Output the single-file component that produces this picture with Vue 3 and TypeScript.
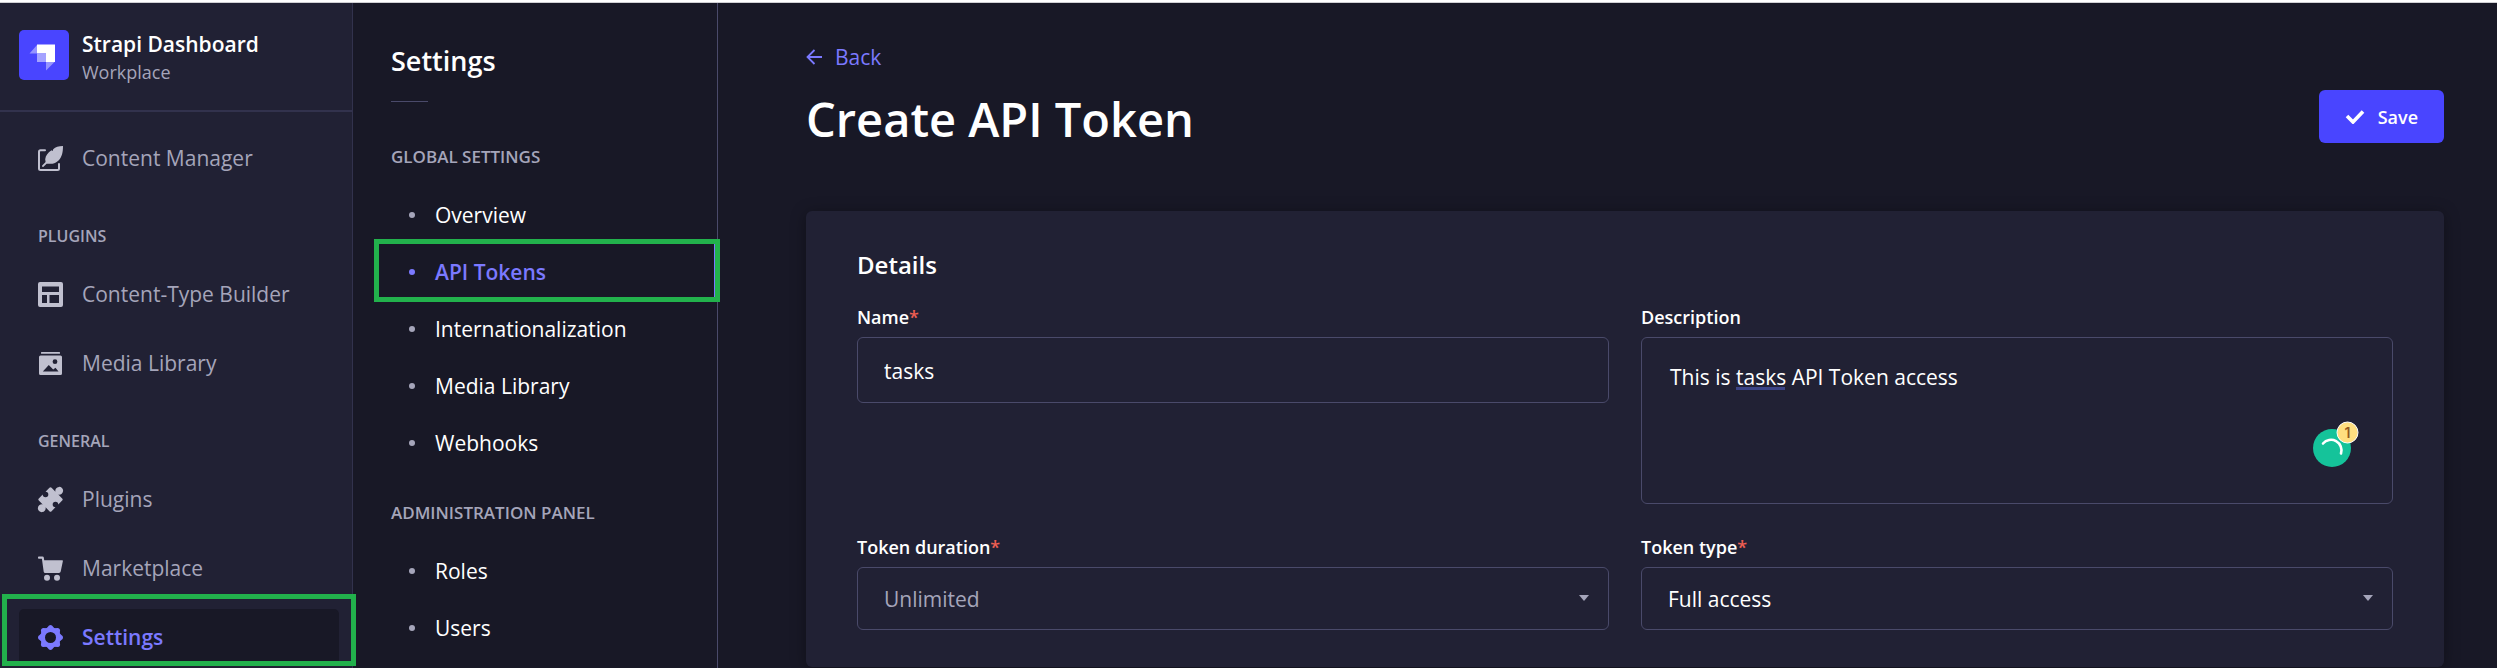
<script setup lang="ts">
import { ref } from 'vue'

type IconName = 'feather' | 'layout' | 'media' | 'puzzle' | 'cart' | 'gear'

interface NavItem {
  label: string
  icon: IconName
  active?: boolean
}

interface NavGroup {
  title?: string
  items: NavItem[]
}

interface SubGroup {
  title: string
  items: { label: string; active?: boolean }[]
}

const navGroups: NavGroup[] = [
  { items: [{ label: 'Content Manager', icon: 'feather' }] },
  {
    title: 'Plugins',
    items: [
      { label: 'Content-Type Builder', icon: 'layout' },
      { label: 'Media Library', icon: 'media' },
    ],
  },
  {
    title: 'General',
    items: [
      { label: 'Plugins', icon: 'puzzle' },
      { label: 'Marketplace', icon: 'cart' },
      { label: 'Settings', icon: 'gear', active: true },
    ],
  },
]

const subGroups: SubGroup[] = [
  {
    title: 'Global settings',
    items: [
      { label: 'Overview' },
      { label: 'API Tokens', active: true },
      { label: 'Internationalization' },
      { label: 'Media Library' },
      { label: 'Webhooks' },
    ],
  },
  {
    title: 'Administration panel',
    items: [{ label: 'Roles' }, { label: 'Users' }],
  },
]

const teeth = [0, 45, 90, 135, 180, 225, 270, 315]

const name = ref('tasks')
const description = ref('This is tasks API Token access')
const duration = ref('Unlimited')
const tokenType = ref('Full access')
</script>

<template>
  <div class="page">
    <div class="strip"></div>
    <div class="shell">
      <nav class="sidebar" aria-label="Main">
        <div class="brand">
          <svg class="logo" viewBox="0 0 50 50" aria-hidden="true">
            <rect width="50" height="50" rx="5" fill="#4945ff" />
            <path d="M18 14.5H36V32H27V23.5H18Z" fill="#fff" />
            <path d="M18 23.5H27V32H18Z" fill="#a4a2ff" />
            <path d="M18 15V23.5H10.500Z M27 32H35.500L27 40.500Z" fill="#9593ff" />
          </svg>
          <div>
            <div class="brand-name">Strapi Dashboard</div>
            <div class="brand-sub">Workplace</div>
          </div>
        </div>

        <div v-for="(group, g) in navGroups" :key="g" class="nav-group">
          <h2 v-if="group.title" class="group-title">{{ group.title }}</h2>
          <ul class="nav-list">
            <li v-for="item in group.items" :key="item.label">
              <a href="#" class="nav-link" :class="{ active: item.active }">
                <svg class="nav-icon" viewBox="0 0 25 25" aria-hidden="true">
                  <g v-if="item.icon === 'feather'">
                    <path d="M7 4.200H2.500Q1 4.200 1 5.700V22.500Q1 24 2.500 24H19.500Q21 24 21 22.500V18" fill="none" stroke="currentColor" stroke-width="2" stroke-linecap="round" />
                    <path d="M25 0C20.500 0 17.500 1 15.200 3.200L14.700 4.900L13.600 4.300C10 6.500 7.600 9.500 7.200 13.200L7.600 16L4.200 19.500C3.500 20.300 4.700 21.500 5.500 20.800L8.600 17.700H14.500C17 17.200 19 16.200 20.500 14.600C23.900 11 25 6.500 25 0Z" fill="currentColor" />
                  </g>
                  <path v-else-if="item.icon === 'layout'" fill="currentColor" fill-rule="evenodd" d="M2 0H23Q25 0 25 2V23Q25 25 23 25H2Q0 25 0 23V2Q0 0 2 0ZM4 4.500V10H21V4.500ZM4 13V21H9V13ZM11.500 13V21H21V13Z" />
                  <g v-else-if="item.icon === 'media'" fill="currentColor">
                    <rect x="3" y="1" width="19" height="1.800" rx=".6" />
                    <path fill-rule="evenodd" d="M2.500 4.500H22.500Q24 4.500 24 6V22.500Q24 24 22.500 24H2.500Q1 24 1 22.500V6Q1 4.500 2.500 4.500ZM17 8.300A2.400 2.400 0 1 0 17 13.100A2.400 2.400 0 1 0 17 8.300ZM4.800 20.500H20.500L17.500 16.800L15.200 18.500L10.800 14Z" />
                  </g>
                  <path v-else-if="item.icon === 'puzzle'" fill="currentColor" transform="translate(12.5 12.500) rotate(45)" d="M-7.500 -9H-2A3.900 3.900 0 1 1 2 -9H7.500A1.500 1.500 0 0 1 9 -7.500V-2A2.800 2.800 0 1 0 9 2V7.500A1.500 1.500 0 0 1 7.500 9H2A3.900 3.900 0 1 1 -2 9H-7.500A1.500 1.500 0 0 1 -9 7.500V2A2.800 2.800 0 1 0 -9 -2V-7.500A1.500 1.500 0 0 1 -7.500 -9Z" />
                  <g v-else-if="item.icon === 'cart'" fill="currentColor">
                    <path d="M.8 .5H4.500Q5.600 .5 5.800 1.600L6.200 4.200H24.200Q25.100 4.200 24.900 5.100L22.700 15.600Q22.400 17 21 17H7.200Q5.900 17 5.700 15.700L3.900 2.700H.8Q0 2.700 0 1.900V1.300Q0 .5 .8 .5Z" />
                    <circle cx="9" cy="21.800" r="3" />
                    <circle cx="19" cy="21.800" r="3" />
                  </g>
                  <g v-else transform="translate(12.5 12.500)">
                    <circle r="7.900" fill="none" stroke="currentColor" stroke-width="4.800" />
                    <path v-for="deg in teeth" :key="deg" :transform="`rotate(${deg})`" d="M-4 -9L-1.500 -12.100Q0 -13 1.500 -12.100L4 -9Z" fill="currentColor" />
                  </g>
                </svg>
                <span>{{ item.label }}</span>
              </a>
            </li>
          </ul>
        </div>
      </nav>

      <aside class="subnav">
        <h2 class="subnav-title">Settings</h2>
        <div class="subnav-rule"></div>
        <section v-for="group in subGroups" :key="group.title" class="sub-group">
          <h3 class="sub-title">{{ group.title }}</h3>
          <ul class="nav-list">
            <li v-for="item in group.items" :key="item.label">
              <a href="#" class="sub-link" :class="{ active: item.active }">
                <span class="bullet"></span>
                <span>{{ item.label }}</span>
              </a>
            </li>
          </ul>
        </section>
      </aside>

      <main class="main">
        <a href="#" class="back">
          <svg viewBox="0 0 16 16" class="back-icon" aria-hidden="true">
            <path d="M16 8H1.500M8.500 1L1.500 8L8.500 15" fill="none" stroke="currentColor" stroke-width="1.800" />
          </svg>
          <span>Back</span>
        </a>
        <div class="heading">
          <h1>Create API Token</h1>
          <button type="submit" form="token-form" class="save">
            <svg viewBox="0 0 19 14" class="save-icon" aria-hidden="true">
              <path d="M1.500 6L7.500 12L17.500 1.500" fill="none" stroke="currentColor" stroke-width="3.600" />
            </svg>
            <span>Save</span>
          </button>
        </div>

        <form id="token-form" class="card" @submit.prevent>
          <h2 class="card-title">Details</h2>
          <div class="grid">
            <div class="field">
              <label for="name">Name<span class="req">*</span></label>
              <input id="name" v-model="name" type="text" class="control input" />
            </div>
            <div class="field">
              <label for="description">Description</label>
              <div class="wrap">
                <textarea id="description" v-model="description" class="control textarea" spellcheck="false"></textarea>
                <span class="hint-line"></span>
                <svg class="checker" viewBox="0 0 46 46" aria-hidden="true">
                  <circle cx="19" cy="27" r="19" fill="#15c39a" />
                  <path d="M10 22.500A10.500 10.500 0 0 1 28 32.500" fill="none" stroke="#fff" stroke-width="2.600" stroke-linecap="round" />
                  <circle cx="34.500" cy="11.500" r="10.500" fill="#ffdf80" stroke="#fff" stroke-width="1" />
                  <text x="34.500" y="16.500" text-anchor="middle" class="count">1</text>
                </svg>
              </div>
            </div>
            <div class="field">
              <label for="duration">Token duration<span class="req">*</span></label>
              <div class="wrap">
                <select id="duration" v-model="duration" class="control select muted">
                  <option>Unlimited</option>
                </select>
                <svg class="caret" viewBox="0 0 10 6" aria-hidden="true"><path d="M0 0H10L5 6Z" fill="#a5a5ba" /></svg>
              </div>
            </div>
            <div class="field">
              <label for="type">Token type<span class="req">*</span></label>
              <div class="wrap">
                <select id="type" v-model="tokenType" class="control select">
                  <option>Full access</option>
                </select>
                <svg class="caret" viewBox="0 0 10 6" aria-hidden="true"><path d="M0 0H10L5 6Z" fill="#a5a5ba" /></svg>
              </div>
            </div>
          </div>
        </form>
      </main>
    </div>
  </div>
</template>

<style>
body {
  margin: 0;
  background: #181826;
}
</style>

<style scoped>
* {
  box-sizing: border-box;
}
.page {
  display: flex;
  flex-direction: column;
  min-height: 100vh;
  background: #181826;
  color: #fff;
  font-family: 'Open Sans', 'Noto Sans', sans-serif;
  font-size: 21px;
  line-height: 28px;
}
.strip {
  height: 3px;
  background: #fff;
  border-bottom: 1px solid #d0d0d4;
}
.shell {
  flex: 1;
  display: flex;
}
h1,
h2,
h3 {
  margin: 0;
  font-weight: 600;
}
a {
  color: inherit;
  text-decoration: none;
}
.nav-list {
  list-style: none;
  margin: 0;
  padding: 0;
}

.sidebar {
  position: relative;
  z-index: 1;
  flex: none;
  width: 353px;
  background: #212134;
  border-right: 1px solid #32324d;
}
.brand {
  display: flex;
  gap: 13px;
  height: 109px;
  padding: 27px 19px 0;
  border-bottom: 2px solid #32324d;
}
.logo {
  flex: none;
  width: 50px;
  height: 50px;
}
.brand-name {
  font-size: 21px;
  line-height: 28px;
  font-weight: 600;
}
.brand-sub {
  font-size: 18px;
  line-height: 28px;
  color: #a5a5ba;
}
.nav-group {
  padding: 18px 13px 0 19px;
}
.nav-group + .nav-group {
  padding-top: 38px;
}
.group-title,
.sub-title {
  font-size: 16px;
  line-height: 24px;
  color: #a5a5ba;
  text-transform: uppercase;
}
.group-title {
  padding-left: 19px;
  margin-bottom: 18px;
}
.nav-list li + li .nav-link {
  margin-top: 13px;
}
.nav-link {
  position: relative;
  display: flex;
  align-items: center;
  gap: 19px;
  height: 56px;
  padding-left: 19px;
  border-radius: 5px;
  color: #a5a5ba;
}
.nav-icon {
  width: 25px;
  height: 25px;
  color: #c0c0cf;
  overflow: visible;
}
.nav-link.active {
  background: #181826;
  color: #7b79ff;
  font-weight: 600;
}
.nav-link.active .nav-icon {
  color: #7b79ff;
}
.nav-link.active::after {
  content: '';
  position: absolute;
  inset: -15px -17px -1px;
  border: 5px solid #22b14c;
}

.subnav {
  flex: none;
  width: 365px;
  padding-top: 40px;
  border-right: 1px solid #4a4a6a;
}
.subnav-title {
  padding-left: 38px;
  font-size: 27px;
  line-height: 36px;
}
.subnav-rule {
  width: 37px;
  height: 1px;
  margin: 22px 0 0 38px;
  background: #4a4a6a;
}
.sub-title {
  padding-left: 38px;
  font-size: 17px;
}
.sub-group {
  padding-top: 43px;
}
.sub-group .nav-list {
  padding-top: 17px;
}
.sub-group + .sub-group {
  padding-top: 30px;
}
.sub-link {
  position: relative;
  display: flex;
  align-items: center;
  gap: 20px;
  height: 57px;
  padding-left: 56px;
}
.bullet {
  width: 6px;
  height: 6px;
  border-radius: 50%;
  background: #a5a5ba;
}
.sub-link.active {
  color: #7b79ff;
  border-right: 3px solid #7b79ff;
}
.sub-link.active > span {
  font-weight: 600;
}
.sub-link.active .bullet {
  background: #7b79ff;
}
.sub-link.active::after {
  content: '';
  position: absolute;
  inset: -4px -6px -2px 21px;
  border: 5px solid #22b14c;
}

.main {
  flex: 1;
  min-width: 0;
  padding: 40px 53px 0 88px;
}
.back {
  display: inline-flex;
  align-items: center;
  gap: 13px;
  color: #7b79ff;
}
.back-icon {
  width: 16px;
  height: 16px;
}
.heading {
  display: flex;
  align-items: flex-start;
  justify-content: space-between;
  margin-top: 16px;
}
h1 {
  font-size: 47px;
  line-height: 64px;
}
.save {
  display: flex;
  align-items: center;
  gap: 13px;
  height: 53px;
  margin-top: 3px;
  padding: 0 26px;
  border: 0;
  border-radius: 6px;
  background: #4945ff;
  color: #fff;
  font: 600 18px/24px 'Open Sans', 'Noto Sans', sans-serif;
}
.save-icon {
  width: 20px;
  height: 14px;
}
.card {
  margin-top: 60px;
  padding: 38px 51px 37px;
  border-radius: 6px;
  background: #212134;
  box-shadow: 0 2px 15px rgba(3, 3, 5, 0.35);
}
.card-title {
  font-size: 24px;
  line-height: 32px;
}
.grid {
  display: grid;
  grid-template-columns: 1fr 1fr;
  gap: 31px 32px;
  margin-top: 24px;
}
.field label {
  display: block;
  margin-bottom: 8px;
  font-size: 18px;
  line-height: 24px;
  font-weight: 600;
}
.req {
  color: #ee5e52;
}
.wrap {
  position: relative;
}
.control {
  display: block;
  width: 100%;
  margin: 0;
  padding: 0 26px;
  border: 1px solid #4a4a6a;
  border-radius: 6px;
  outline: 0;
  background: #212134;
  color: #fff;
  font: 400 21px/28px 'Open Sans', 'Noto Sans', sans-serif;
}
.input {
  height: 66px;
  padding-top: 2px;
}
.textarea {
  height: 167px;
  padding: 25px 28px;
  resize: none;
}
.select {
  height: 63px;
  appearance: none;
}
.select.muted {
  color: #a5a5ba;
}
.caret {
  position: absolute;
  top: 28px;
  right: 20px;
  width: 10px;
  height: 6px;
}
.hint-line {
  position: absolute;
  top: 50px;
  left: 95px;
  width: 49px;
  height: 3px;
  background: #3b4486;
}
.checker {
  position: absolute;
  right: 34px;
  bottom: 37px;
  width: 46px;
  height: 46px;
}
.count {
  fill: #94591f;
  font: 600 14px Inter, sans-serif;
}
</style>
